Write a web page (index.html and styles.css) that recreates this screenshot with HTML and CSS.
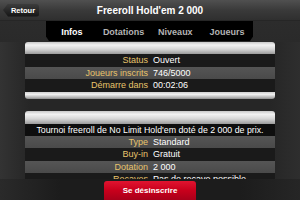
FILE: index.html
```html
<!DOCTYPE html>
<html lang="fr">
<head>
<meta charset="utf-8">
<title>Freeroll Hold'em 2 000</title>
<link rel="stylesheet" href="styles.css">
</head>
<body>
<div class="app">
  <header class="header">
    <div class="left"><a class="back">Retour</a></div>
    <h1 class="title">Freeroll Hold'em 2 000</h1>
    <div class="right"></div>
  </header>
  <nav class="tabs-row">
    <div class="tabs">
      <span class="tab active">Infos</span>
      <span class="tab">Dotations</span>
      <span class="tab">Niveaux</span>
      <span class="tab">Joueurs</span>
    </div>
  </nav>
  <main class="content">
    <section class="panel">
      <div class="panel-head"></div>
      <div class="row dark"><span class="label">Status</span><span class="value">Ouvert</span></div>
      <div class="row light"><span class="label">Joueurs inscrits</span><span class="value">746/5000</span></div>
      <div class="row dark"><span class="label">Démarre dans</span><span class="value">00:02:06</span></div>
      <div class="panel-foot"></div>
    </section>
    <section class="panel second">
      <div class="panel-head tall"></div>
      <div class="desc">Tournoi freeroll de No Limit Hold'em doté de 2 000 de prix.</div>
      <div class="row light"><span class="label">Type</span><span class="value">Standard</span></div>
      <div class="row dark"><span class="label">Buy-in</span><span class="value">Gratuit</span></div>
      <div class="row light"><span class="label">Dotation</span><span class="value">2 000</span></div>
      <div class="row dark"><span class="label">Recaves</span><span class="value">Pas de recave possible</span></div>
    </section>
  </main>
  <footer class="bottombar">
    <button class="unregister">Se désinscrire</button>
  </footer>
</div>
</body>
</html>
```
FILE: styles.css
```css
html, body {
  margin: 0;
  padding: 0;
}
body {
  width: 300px;
  height: 200px;
  overflow: hidden;
  background: #222;
  font-family: "Liberation Sans", Arial, sans-serif;
}
.app {
  width: 300px;
  height: 200px;
  display: flex;
  flex-direction: column;
  background: linear-gradient(90deg, #333 0%, #262626 10%, #262626 90%, #2e2e2e 100%);
}
.header {
  height: 21px;
  flex: none;
  display: grid;
  grid-template-columns: 1fr auto 1fr;
  align-items: center;
  background: linear-gradient(#505050, #3a3a3a 50%, #2f2f2f);
  border-bottom: 1px solid #262626;
  box-sizing: border-box;
}
.left {
  display: flex;
  align-items: center;
}
.back {
  margin-left: 3px;
  width: 36px;
  height: 13px;
  box-sizing: border-box;
  padding-left: 4px;
  display: flex;
  align-items: center;
  justify-content: center;
  color: #fff;
  font-weight: bold;
  font-size: 7.5px;
  background: linear-gradient(#3c3c3c, #141414);
  border-radius: 0 3px 3px 0;
  clip-path: polygon(0 50%, 5px 0, 100% 0, 100% 100%, 5px 100%);
}
.title {
  margin: 0;
  color: #fff;
  font-size: 10px;
  font-weight: bold;
  white-space: nowrap;
}
.tabs-row {
  height: 21px;
  flex: none;
  padding-left: 46px;
  box-sizing: border-box;
  background: linear-gradient(#2c2c2c, #2a2a2a);
}
.tabs {
  width: 207px;
  height: 20px;
  background: #000;
  display: flex;
  clip-path: polygon(0 0, 100% 0, 100% 78%, calc(100% - 3px) 100%, 3px 100%, 0 78%);
}
.tab {
  flex: 1;
  text-align: center;
  padding-top: 6px;
  line-height: 11px;
  font-size: 9px;
  font-weight: bold;
  color: #b4b4b4;
}
.tab.active {
  color: #fff;
}
.content {
  flex: 1;
  overflow: hidden;
  padding: 0 25px;
  display: flex;
  flex-direction: column;
  gap: 12px;
}
.panel {
  display: flex;
  flex-direction: column;
  flex: none;
}
.panel-head {
  height: 12px;
  border-radius: 3px 3px 0 0;
  background: linear-gradient(#c8c8c8, #f2f2f2 25%, #d6d6d6 60%, #9a9a9a);
}
.panel-head.tall {
  height: 13px;
}
.panel-foot {
  height: 7px;
  border-radius: 0 0 3px 3px;
  background: linear-gradient(#d0d0d0, #f0f0f0 35%, #b0b0b0 80%, #8a8a8a);
}
.row {
  height: 12.5px;
  display: grid;
  grid-template-columns: 1fr 1fr;
  align-items: center;
  font-size: 9px;
  line-height: 12px;
  white-space: nowrap;
}
.row.dark {
  background: #1a1a1a;
}
.row.light {
  background: linear-gradient(#555, #4a4a4a);
}
.label {
  text-align: right;
  padding-right: 2px;
  color: #e7c46c;
}
.value {
  padding-left: 3px;
  color: #fff;
}
.desc {
  height: 12px;
  background: #0e0e0e;
  color: #fff;
  font-size: 8.8px;
  line-height: 12px;
  text-align: center;
  white-space: nowrap;
}
.bottombar {
  height: 21px;
  flex: none;
  display: flex;
  justify-content: center;
  align-items: flex-end;
  background: linear-gradient(90deg, #2a2a2a, #1c1c1c 20%, #1c1c1c 80%, #262626);
}
.unregister {
  width: 92px;
  height: 19px;
  border: none;
  padding: 0;
  border-radius: 3px 3px 0 0;
  background: linear-gradient(#e01430, #c8001c 50%, #a8001a);
  color: #fff;
  font-family: "Liberation Sans", Arial, sans-serif;
  font-weight: bold;
  font-size: 8px;
}
```
